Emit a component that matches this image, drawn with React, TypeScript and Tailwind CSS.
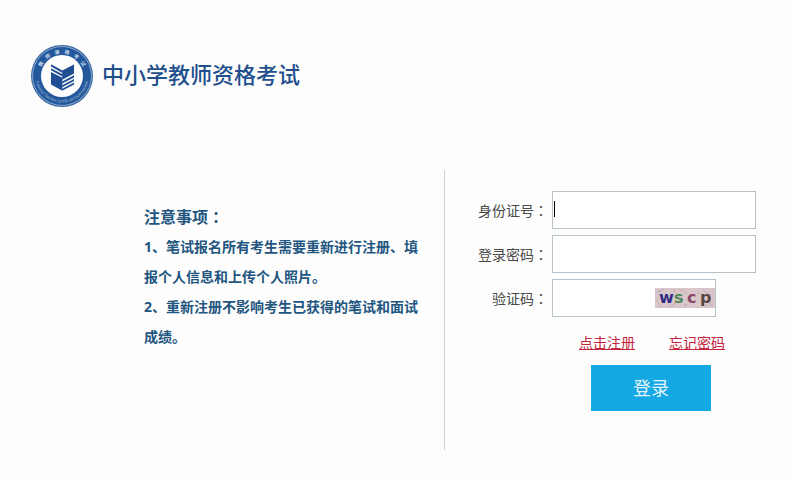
// App.tsx
import { useState } from 'react';
import type { ReactNode } from 'react';

const ringChars = [
    { char: '教', angle: -60 },
    { char: '师', angle: -36 },
    { char: '资', angle: -12 },
    { char: '格', angle: 12 },
    { char: '考', angle: 36 },
    { char: '试', angle: 60 },
];

function Logo() {
    return (
        <svg viewBox="0 0 62 62" className="w-[62px] h-[62px] shrink-0" role="img" aria-label="中小学教师资格考试">
            <defs>
                <path id="ring-bottom" d="M 4.4 31 A 26.6 26.6 0 0 0 57.6 31" />
            </defs>
            <circle cx="31" cy="31" r="31" fill="#3465a0" />
            <circle cx="31" cy="31" r="29.4" fill="none" stroke="#a9c0dc" strokeWidth="0.8" />
            <circle cx="31" cy="31" r="28.8" fill="#23589c" />
            <circle cx="31" cy="31" r="21" fill="#fdfdfd" />
            <g className="font-['Noto_Sans_CJK_SC',sans-serif]" fill="#c9d9ec" textAnchor="middle">
                {ringChars.map(({ char, angle }) => (
                    <text key={char} x="31" y="8.6" fontSize="5" fontWeight="bold" transform={`rotate(${angle} 31 31)`}>
                        {char}
                    </text>
                ))}
                <text fontSize="3.8" fill="#a9c0dc">
                    <textPath href="#ring-bottom" startOffset="50%">National Teacher Certificate Examination</textPath>
                </text>
            </g>
            {/* open book */}
            <g fill="#1f4f92">
                <path d="M20 31 L31.4 36.8 V45.8 L20 39.6 Z" />
                <path d="M20 19.2 L31.4 25.4 V28 L20 21.4 Z" />
                <path d="M20 23.2 L31.4 29.2 V31.4 L20 25.2 Z" />
                <path d="M20 27 L31.4 32.8 V37.4 L20 31.6 Z" />
                <path d="M31.2 25.4 L43 19.4 V28.6 L31.2 34.8 Z" />
                <path d="M31.2 36.4 L43 30.2 V32.4 L31.2 38.6 Z" />
                <path d="M31.2 40.2 L43 34 V36 L31.2 42.2 Z" />
                <path d="M31.2 43.8 L43 37.6 V39.6 L31.2 45.8 Z" />
            </g>
        </svg>
    );
}

function Captcha() {
    return (
        <svg viewBox="0 0 60 20" className="w-[60px] h-5 shrink-0" role="img" aria-label="wscp">
            <rect width="60" height="20" fill="#d8c6cb" />
            <g fill="none" strokeWidth="1">
                <path d="M0 5 L9 1 M14 19 L24 13 M47 2 L58 8" stroke="#c3adb9" />
                <path d="M2 17 L15 2 M30 3 L44 18" stroke="#e8d8cd" />
                <path d="M24 1 L34 6 M1 12 L6 19 M50 19 L59 13" stroke="#c9b7a6" />
                <path d="M3 3 h3 M19 3 h2 M29 17 h3 M43 5 h2 M55 17 h3" stroke="#b7a4b6" />
            </g>
            <g className="font-['DejaVu_Sans',sans-serif]" fontSize="16" fontWeight="bold">
                <text x="4" y="15" fill="#2f2d84">w</text>
                <text x="19" y="15" fill="#4f8a55">s</text>
                <text x="32" y="15" fill="#884668">c</text>
                <text x="45" y="15" fill="#594542">p</text>
            </g>
        </svg>
    );
}

// full-width colon, centred in its cell
function Colon() {
    return <span className="font-['Noto_Sans_CJK_JP',sans-serif]">：</span>;
}

function Field({ id, label, children }: { id: string; label: string; children: ReactNode }) {
    return (
        <div className="flex items-center">
            <label htmlFor={id} className="w-[104px] pr-1 shrink-0 text-right text-sm text-[#484848]">
                {label}<Colon />
            </label>
            {children}
        </div>
    );
}

export default function App() {
    const [idNumber, setIdNumber] = useState('');
    const [password, setPassword] = useState('');
    const [code, setCode] = useState('');

    return (
        <div className="min-h-screen bg-[#fdfdfd] font-['Noto_Sans','Noto_Sans_CJK_SC',sans-serif]">
            <header className="flex items-center gap-[9px] pl-[31px] pt-[45px]">
                <Logo />
                <h1 className="pb-1 text-[22px] leading-8 font-medium text-[#1f4f8c]">中小学教师资格考试</h1>
            </header>

            <main className="flex mt-[63px] pr-[34px]">
                {/* notice */}
                <section className="flex-1 pl-36 pr-6 pt-[31px] text-[#22557f]">
                    <h2 className="text-base leading-[30px] font-bold">注意事项<Colon /></h2>
                    <ol className="text-sm leading-[30px] font-bold">
                        <li>1、笔试报名所有考生需要重新进行注册、填报个人信息和上传个人照片。</li>
                        <li>2、重新注册不影响考生已获得的笔试和面试成绩。</li>
                    </ol>
                </section>

                {/* login form */}
                <form
                    className="min-h-[280px] border-l border-[#cfcfd4] pl-[3px] pt-[21px]"
                    onSubmit={(e) => e.preventDefault()}
                >
                    <div className="flex flex-col gap-[6px]">
                        <Field id="idNumber" label="身份证号">
                            <div className="relative">
                                <input
                                    id="idNumber"
                                    type="text"
                                    value={idNumber}
                                    onChange={(e) => setIdNumber(e.target.value)}
                                    className="block w-[204px] h-[38px] px-1 border border-[#b7c2c9] bg-white text-sm outline-none"
                                />
                                {idNumber === '' && (
                                    <span className="absolute left-[2px] top-[10px] w-px h-4 bg-black pointer-events-none" />
                                )}
                            </div>
                        </Field>
                        <Field id="password" label="登录密码">
                            <input
                                id="password"
                                type="password"
                                value={password}
                                onChange={(e) => setPassword(e.target.value)}
                                className="block w-[204px] h-[38px] px-1 border border-[#b7c2c9] bg-white text-sm outline-none"
                            />
                        </Field>
                        <Field id="code" label="验证码">
                            <div className="flex items-center w-[164px] h-[38px] border border-[#b7c2c9] bg-white">
                                <input
                                    id="code"
                                    type="text"
                                    value={code}
                                    onChange={(e) => setCode(e.target.value)}
                                    className="flex-1 min-w-0 h-full px-1 text-sm outline-none"
                                />
                                <Captcha />
                            </div>
                        </Field>
                    </div>

                    <div className="flex gap-[34px] mt-4 pl-[131px] text-sm text-[#c4243c]">
                        <a href="#register" className="underline">点击注册</a>
                        <a href="#forgot" className="underline">忘记密码</a>
                    </div>

                    <button
                        type="submit"
                        className="block ml-[143px] mt-3 w-[120px] h-[46px] bg-[#14a8e4] text-lg text-[#e4f6fc]"
                    >
                        登录
                    </button>
                </form>
            </main>
        </div>
    );
}
